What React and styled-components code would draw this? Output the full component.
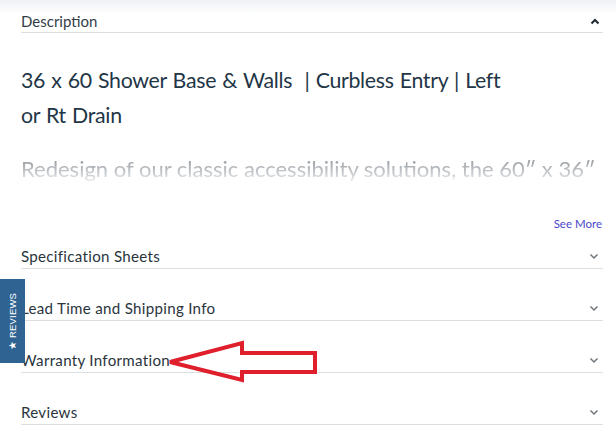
import React from "react";
import styled, { createGlobalStyle } from "styled-components";

const Global = createGlobalStyle`
  html, body {
    margin: 0;
    padding: 0;
    background: #fff;
  }
  body {
    font-family: Lato, "Open Sans", sans-serif;
    width: 616px;
    height: 448px;
    overflow: hidden;
  }
`;

const Page = styled.div`
  position: relative;
  width: 616px;
  height: 448px;
  overflow: hidden;
  background: linear-gradient(#eef1f4 0px, #fff 14px);
`;

const Content = styled.div`
  padding: 0 13px 0 21px;
`;

const Header = styled.div`
  display: flex;
  align-items: center;
  justify-content: space-between;
  padding: 10px 3px 0 0;
  height: 22px;
  border-bottom: 1px solid #dcdfe2;
  color: #333d46;
  font-size: 15px;
`;

const Title = styled.h1`
  margin: 30px 0 0;
  max-width: 500px;
  font-weight: 400;
  font-size: 21.3px;
  line-height: 35px;
  color: #1f3647;
  letter-spacing: -0.3px;
  word-spacing: 1px;
`;

const Teaser = styled.p`
  margin: 21px -13px 0 0;
  height: 30px;
  overflow: hidden;
  font-size: 22px;
  line-height: 30px;
  white-space: nowrap;
  color: #a3a8ad;
  -webkit-mask-image: linear-gradient(#000 30%, rgba(0, 0, 0, 0.15) 100%);
  mask-image: linear-gradient(#000 30%, rgba(0, 0, 0, 0.15) 100%);
`;

const SeeMore = styled.div`
  margin-top: 33px;
  text-align: right;
  font-size: 11.5px;
  line-height: 14px;
  color: #4a48cc;
  padding-right: 1px;
`;

const Row = styled.div`
  display: flex;
  align-items: center;
  justify-content: space-between;
  padding: ${(p) => (p.$first ? "17px" : "31px")} 4px 3px 0;
  line-height: 17px;
  font-size: 15.1px;
  letter-spacing: 0.3px;
  color: #2a343c;
  border-bottom: 1px solid #dcdfe2;
`;

const Tab = styled.div`
  position: absolute;
  left: 0;
  top: 279px;
  width: 25px;
  height: 84px;
  background: #2f6391;
  display: flex;
  align-items: center;
  justify-content: center;
`;

const TabLabel = styled.span`
  transform: rotate(-90deg);
  white-space: nowrap;
  color: #fff;
  font-family: "Liberation Sans", Arial, sans-serif;
  font-size: 9.5px;
  letter-spacing: 0.2px;
`;

const Arrow = styled.svg`
  position: absolute;
  left: 160px;
  top: 330px;
`;

function Chevron({ up }) {
  return (
    <svg width="10" height="7" viewBox="0 0 10 7">
      <path
        d={up ? "M1.5 5.5 L5 2 L8.5 5.5" : "M1.5 1.5 L5 5 L8.5 1.5"}
        fill="none"
        stroke={up ? "#1d2a33" : "#6f777d"}
        strokeWidth={up ? 2 : 1.5}
      />
    </svg>
  );
}

const sections = ["Specification Sheets", "Lead Time and Shipping Info", "Warranty Information", "Reviews"];

export default function App() {
  return (
    <>
      <Global />
      <Page>
        <Content>
          <Header>
            <span>Description</span>
            <Chevron up />
          </Header>
          <Title>36 x 60 Shower Base &amp; Walls&nbsp; | Curbless Entry | Left or Rt Drain</Title>
          <Teaser>Redesign of our classic accessibility solutions, the 60″ x 36″</Teaser>
          <SeeMore>See More</SeeMore>
          {sections.map((s, i) => (
            <Row key={s} $first={i === 0}>
              <span>{s}</span>
              <Chevron />
            </Row>
          ))}
        </Content>
        <Tab>
          <TabLabel>★ REVIEWS</TabLabel>
        </Tab>
        <Arrow width="170" height="60" viewBox="0 0 170 60">
          <path
            d="M10 32 L82 13 L82 23 L155 23 L155 42 L82 42 L82 50 Z"
            fill="none"
            stroke="#e01f2d"
            strokeWidth="4"
            strokeLinejoin="miter"
          />
        </Arrow>
      </Page>
    </>
  );
}
